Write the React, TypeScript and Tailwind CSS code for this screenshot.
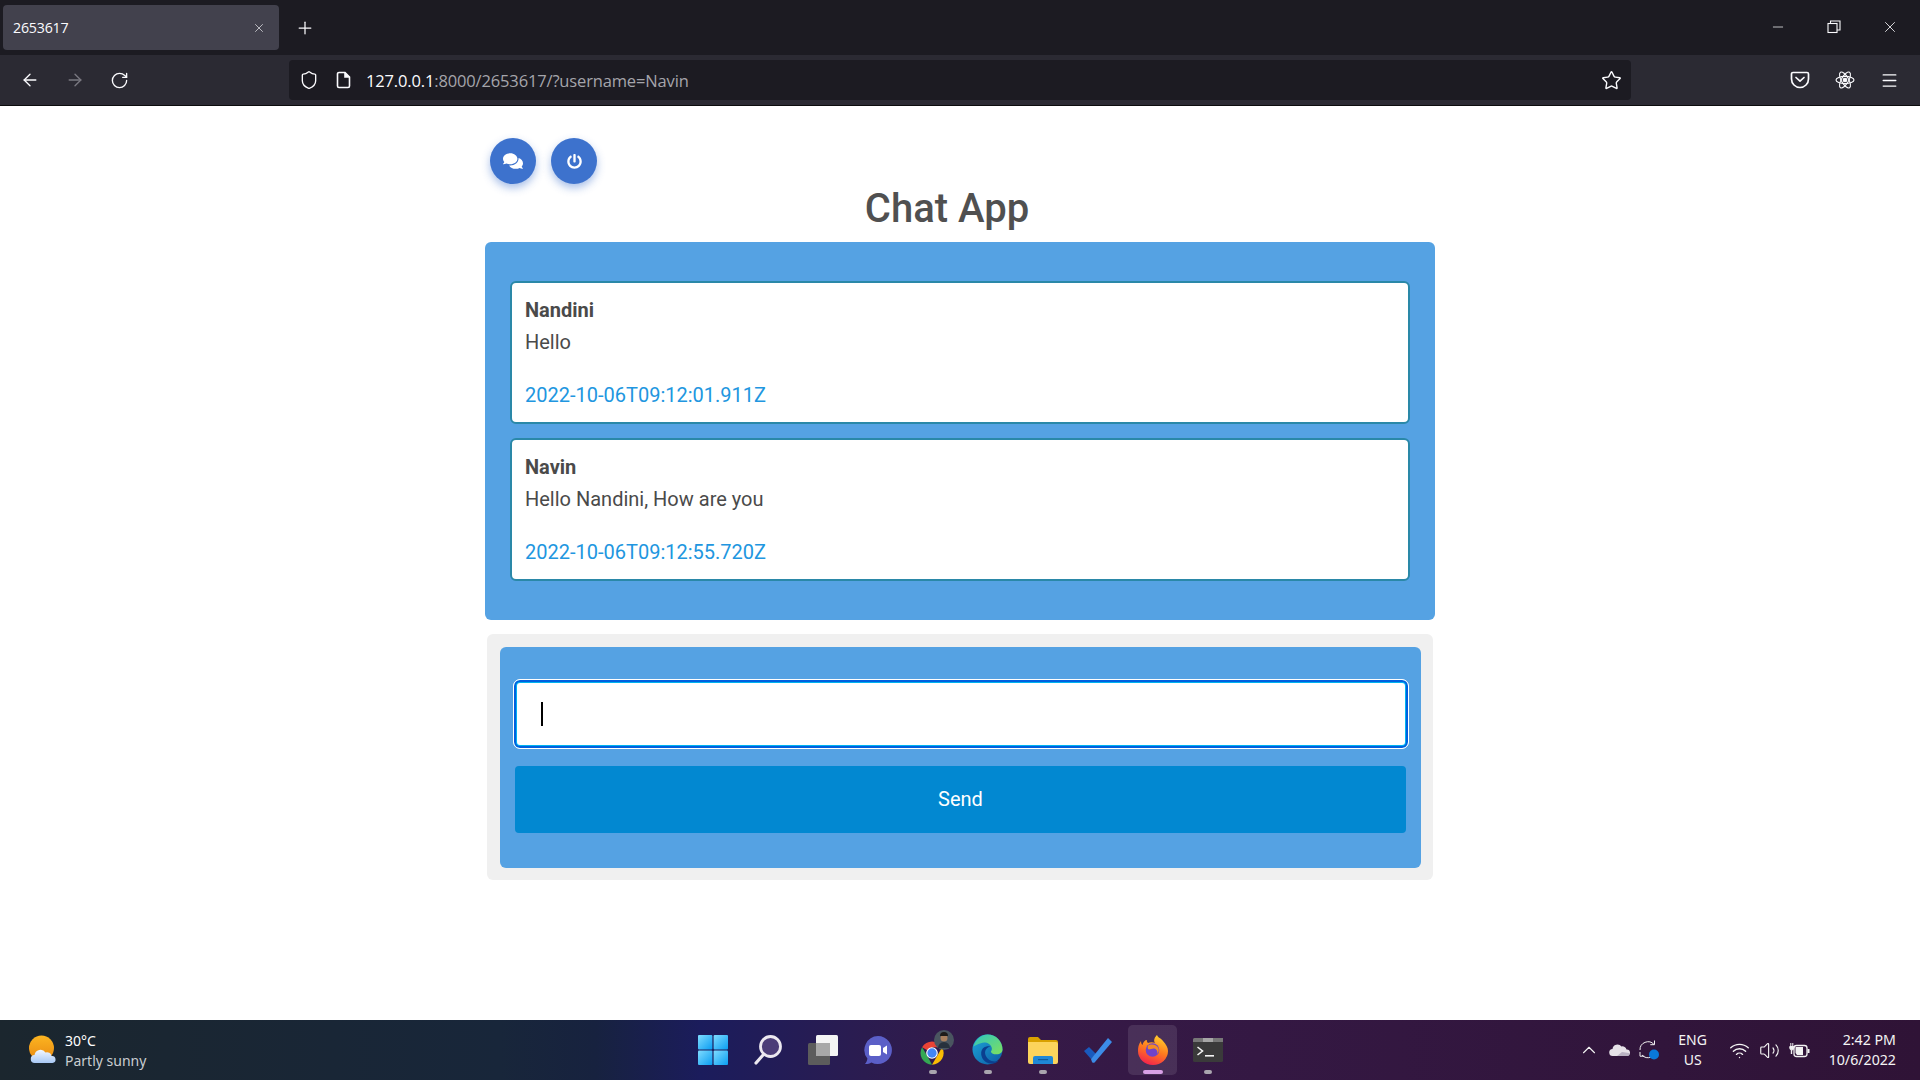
import React from "react";
import { ArrowLeft, ArrowRight, RotateCw, Shield, Star, Menu, X, Plus, Minus, ChevronUp, Wifi, Volume2 } from "lucide-react";
import { FaComments, FaPowerOff } from "react-icons/fa";

const Messages = [
  { name: "Nandini", text: "Hello", time: "2022-10-06T09:12:01.911Z" },
  { name: "Navin", text: "Hello Nandini, How are you", time: "2022-10-06T09:12:55.720Z" },
];

function FileIcon() {
  return (
    <svg width="16" height="18" viewBox="0 0 16 18" fill="none" stroke="#fbfbfe" strokeWidth="1.6">
      <path d="M3 1.5h6l4.5 4.5v9a1.5 1.5 0 0 1-1.5 1.5H3A1.5 1.5 0 0 1 1.5 15V3A1.5 1.5 0 0 1 3 1.5z" />
      <path d="M9 1.5V6h4.5" fill="#fbfbfe" />
    </svg>
  );
}

function RestoreIcon() {
  return (
    <svg width="14" height="14" viewBox="0 0 14 14" fill="none" stroke="#fbfbfe" strokeWidth="1.1">
      <rect x="1" y="3.5" width="9" height="9" />
      <path d="M3.5 3.5V1h9.5v9h-3" />
    </svg>
  );
}

function PocketIcon() {
  return (
    <svg width="20" height="18" viewBox="0 0 20 18" fill="none" stroke="#fbfbfe" strokeWidth="1.7" strokeLinecap="round" strokeLinejoin="round">
      <path d="M3 1.5h14A1.5 1.5 0 0 1 18.5 3v5a8.5 8.5 0 0 1-17 0V3A1.5 1.5 0 0 1 3 1.5z" />
      <path d="M6 6.5l4 3.7 4-3.7" />
    </svg>
  );
}

function ReactIcon() {
  return (
    <svg width="20" height="20" viewBox="0 0 20 20" fill="none" stroke="#fbfbfe" strokeWidth="1.1">
      <ellipse cx="10" cy="10" rx="9" ry="3.6" />
      <ellipse cx="10" cy="10" rx="9" ry="3.6" transform="rotate(60 10 10)" />
      <ellipse cx="10" cy="10" rx="9" ry="3.6" transform="rotate(120 10 10)" />
      <circle cx="10" cy="10" r="1.8" fill="#fbfbfe" />
    </svg>
  );
}

function WindowsIcon() {
  return (
    <svg width="30" height="30" viewBox="0 0 30 30">
      <defs>
        <linearGradient id="win" x1="0" y1="0" x2="1" y2="1">
          <stop offset="0" stopColor="#7fdcff" />
          <stop offset="1" stopColor="#0a9df2" />
        </linearGradient>
      </defs>
      <rect x="0" y="0" width="14.4" height="14.4" rx="1" fill="url(#win)" />
      <rect x="15.6" y="0" width="14.4" height="14.4" rx="1" fill="url(#win)" />
      <rect x="0" y="15.6" width="14.4" height="14.4" rx="1" fill="url(#win)" />
      <rect x="15.6" y="15.6" width="14.4" height="14.4" rx="1" fill="url(#win)" />
    </svg>
  );
}

function SearchIcon() {
  return (
    <svg width="28" height="30" viewBox="0 0 28 30" fill="none">
      <circle cx="16.5" cy="11.5" r="10" fill="#4c3d78" stroke="#ece8f0" strokeWidth="2.8" />
      <path d="M9.5 19.5L2 28" stroke="#ece8f0" strokeWidth="3.2" strokeLinecap="round" />
    </svg>
  );
}

function TaskViewIcon() {
  return (
    <svg width="30" height="30" viewBox="0 0 30 30">
      <rect x="0" y="8" width="22" height="22" rx="1.5" fill="#5c5c5c" />
      <rect x="8" y="0" width="22" height="21" rx="1.5" fill="#f4f4f4" />
      <rect x="8" y="8" width="14" height="13" fill="#a8a8a8" />
    </svg>
  );
}

function ChatIcon() {
  return (
    <svg width="30" height="30" viewBox="0 0 30 30">
      <path d="M15 1a14 14 0 1 1-6.6 26.4c-2 1.3-4.400 1.800-6.400 1.600 1.300-1.400 2.200-3.200 2.400-5.400A14 14 0 0 1 15 1z" fill="#5b5fc7" />
      <rect x="6" y="10" width="12" height="11" rx="2" fill="#fff" />
      <path d="M20 13l4-2.500v9L20 17z" fill="#fff" />
    </svg>
  );
}

function ChromeIcon() {
  return (
    <span className="relative block left-[3px] w-[35px] h-[32px]">
      <svg className="absolute left-0 top-[5px]" width="28" height="28" viewBox="0 0 48 48">
        <path d="M24 24L7 14A20 20 0 0 1 41.300 14H24z" fill="#ea4335" />
        <path d="M24 44A20 20 0 0 1 7 14l10 17z" fill="#34a853" />
        <path d="M41.300 14A20 20 0 0 1 24 44l10-17z" fill="#fbbc04" />
        <circle cx="24" cy="24" r="10" fill="#fff" />
        <circle cx="24" cy="24" r="8" fill="#4285f4" />
      </svg>
      <svg className="absolute left-[16px] -top-[4px]" width="20" height="20" viewBox="0 0 20 20">
        <circle cx="10" cy="10" r="10" fill="#4a5560" />
        <circle cx="10" cy="8" r="3.500" fill="#a9805f" />
        <path d="M4 18a6 6 0 0 1 12 0z" fill="#27313d" />
        <path d="M6 6a4 4 0 0 1 8 0z" fill="#1e1c1a" />
      </svg>
    </span>
  );
}

function EdgeIcon() {
  return (
    <svg width="31" height="31" viewBox="0 0 32 32">
      <defs>
        <linearGradient id="edgeA" x1="0" y1="0" x2="1" y2="1">
          <stop offset="0" stopColor="#1ea8d8" />
          <stop offset="1" stopColor="#0c59a4" />
        </linearGradient>
        <linearGradient id="edgeB" x1="0" y1="0" x2="1" y2="1">
          <stop offset="0" stopColor="#2ec5c0" />
          <stop offset="1" stopColor="#7ee05d" />
        </linearGradient>
      </defs>
      <circle cx="16" cy="16" r="15.500" fill="url(#edgeA)" />
      <path d="M1.500 13C4 4.500 10.500.5 16 .5 25 .5 31.500 7.500 31.500 16c0 3-2.500 5-6 5-4 0-6-1.500-6-3 .8-1 1.300-2 .8-4C19.300 10 14 7.500 9 9.500 5.500 10.500 3 12 1.500 13z" fill="url(#edgeB)" />
      <path d="M14 22c-1.500-4 .5-8 5-9-4-1-9 1-9.500 6-.5 6 4 11 10 11.500 3 .2 6-1 8-3-5 2-11 .5-13.500-5.500z" fill="#0b3f8f" />
    </svg>
  );
}

function FolderIcon() {
  return (
    <svg width="30" height="28" viewBox="0 0 30 28">
      <path d="M0 3a2 2 0 0 1 2-2h8l3 3h15a2 2 0 0 1 2 2v4H0z" fill="#d9a100" />
      <path d="M0 6h28a2 2 0 0 1 2 2v18a2 2 0 0 1-2 2H2a2 2 0 0 1-2-2z" fill="#fcd45c" />
      <path d="M5 22a2 2 0 0 1 2-2h16a2 2 0 0 1 2 2v6H5z" fill="#1f88d6" />
      <rect x="10" y="23" width="10" height="1.200" fill="#0f5b9a" />
    </svg>
  );
}

function TodoIcon() {
  return (
    <svg width="30" height="26" viewBox="0 0 30 26">
      <path d="M1 14l5-4 7 7-5 5z" fill="#195abd" />
      <path d="M8 22L25 1l4 4-17 20a2 2 0 0 1-3 0z" fill="#3c8ce7" />
    </svg>
  );
}

function FirefoxIcon() {
  return (
    <svg width="30" height="31" viewBox="0 0 30 31">
      <defs>
        <linearGradient id="ffA" x1="0.7" y1="0" x2="0.3" y2="1">
          <stop offset="0" stopColor="#ffd02c" />
          <stop offset="0.5" stopColor="#ff7a1e" />
          <stop offset="1" stopColor="#f3204e" />
        </linearGradient>
      </defs>
      <path d="M19 1c1 3 4 3 6 6 3 3 5 7 5 10a15 14 0 0 1-30 0c0-3 .5-7 3-10 0 2 .5 3 1.500 4C5 8 7 6 9 6c-.5 1 0 2 1 3 2-1 5-1 7 0-2-3 0-6 2-8z" fill="url(#ffA)" />
      <circle cx="14.500" cy="16" r="6.800" fill="#6f43c9" />
      <path d="M10 11.500c3-2 9-1.500 10.500 3 .5 2 0 4-1 5.500 .2-3-1-5.500-4-5.500-2 0-3 1-4.500 1-1.500-.5-1.500-2.500-1-4z" fill="#f48b24" />
    </svg>
  );
}

function TerminalIcon() {
  return (
    <svg width="30" height="24" viewBox="0 0 30 24">
      <rect x="0" y="0" width="30" height="24" rx="1.500" fill="#3a3a3a" />
      <path d="M0 1.500A1.500 1.500 0 0 1 1.500 0H30v4H0z" fill="#777" />
      <rect x="10" y="0" width="10" height="4" fill="#a6a6a6" />
      <path d="M4.500 9l5 4-5 4" stroke="#f3f3f3" strokeWidth="1.600" fill="none" />
      <rect x="12" y="17" width="9" height="1.600" fill="#f3f3f3" />
    </svg>
  );
}

function WeatherIcon() {
  return (
    <svg width="30" height="30" viewBox="0 0 30 30">
      <defs>
        <linearGradient id="sun" x1="0" y1="0" x2="0" y2="1">
          <stop offset="0" stopColor="#fcb521" />
          <stop offset="1" stopColor="#e98a12" />
        </linearGradient>
        <linearGradient id="cloud" x1="0" y1="0" x2="0" y2="1">
          <stop offset="0" stopColor="#f4f8ff" />
          <stop offset="1" stopColor="#a8c8f5" />
        </linearGradient>
      </defs>
      <circle cx="13.500" cy="13" r="12.500" fill="url(#sun)" />
      <path d="M7 28a4 4 0 0 1-.5-8 6 6 0 0 1 11-2.500 4.500 4.500 0 0 1 6 3.500 3.500 3.500 0 0 1 1 7z" fill="url(#cloud)" />
    </svg>
  );
}

function OneDriveIcon() {
  return (
    <svg width="21" height="14" viewBox="0 0 21 14">
      <path d="M4 13a3.500 3.500 0 0 1-.5-7 5 5 0 0 1 9-2.500 4 4 0 0 1 5 3 3.200 3.200 0 0 1 .5 6.500z" fill="#e6e2e8" />
      <path d="M8 13l5-4 7 1c1 1 .5 3-1.500 3z" fill="#b9b2c2" />
    </svg>
  );
}

function SyncIcon() {
  return (
    <svg width="22" height="22" viewBox="0 0 22 22" fill="none" stroke="#f2f2f2" strokeWidth="1">
      <path d="M2 11a8 8 0 0 1 14-5.500" />
      <path d="M16.500 1.500v4.200h-4.200" />
      <path d="M13 18a8 8 0 0 1-9-2" />
      <path d="M2 13v4.200h4.200" />
      <circle cx="16" cy="15.500" r="5" fill="#0a78d8" stroke="none" />
    </svg>
  );
}

function BatteryIcon() {
  return (
    <svg width="21" height="17" viewBox="0 0 21 17" fill="none" stroke="#f2f2f2" strokeWidth="1.300">
      <rect x="5" y="3.500" width="13" height="11" rx="2.500" />
      <path d="M6.500 5h7.500v8H8l-1.500-2z" fill="#f2f2f2" stroke="none" />
      <rect x="18.500" y="7" width="2" height="4" fill="#f2f2f2" stroke="none" />
      <path d="M2.500 12V8" strokeWidth="1.400" />
      <path d="M.8 4.500h4v1.500a2 2 0 0 1-4 0zM1.800 1v3.500M3.800 1v3.500" fill="#f2f2f2" strokeWidth="1" />
    </svg>
  );
}

export default function App() {
  return (
    <div
      className="w-[1920px] h-[1080px] flex flex-col overflow-hidden bg-white"
      style={{ fontFamily: '"Roboto", sans-serif' }}
    >
      {/* Tab strip */}
      <div className="h-[55px] shrink-0 bg-[#1c1b22] flex items-center pl-[3px] pr-[2px] text-[#fbfbfe] font-['Open_Sans',sans-serif]">
        <div className="w-[276px] h-[45px] rounded-[4px] bg-[#42414d] flex items-center justify-between pl-[10px] pr-[13px]">
          <span className="text-[14.2px] tracking-[-0.2px] mt-[1px]">2653617</span>
          <X size={14} strokeWidth={1.4} className="text-[#d5d5da]" />
        </div>
        <div className="w-[38px] ml-[7px] flex items-center justify-center">
          <Plus size={20} strokeWidth={1.5} />
        </div>
        <div className="ml-auto flex items-center -mt-[1px]">
          <span className="w-[56px] flex justify-center"><Minus size={16} strokeWidth={1.1} /></span>
          <span className="w-[56px] flex justify-center"><RestoreIcon /></span>
          <span className="w-[56px] flex justify-center"><X size={18} strokeWidth={1.1} /></span>
        </div>
      </div>

      {/* Toolbar */}
      <div className="h-[51px] shrink-0 bg-[#2b2a33] border-b border-[#0c0c0d] flex items-center pl-[20px] pr-[21px] text-[#fbfbfe] font-['Open_Sans',sans-serif]">
        <ArrowLeft size={20} strokeWidth={1.6} />
        <ArrowRight size={20} strokeWidth={1.6} className="ml-[25px] text-[#7a7981]" />
        <RotateCw size={19} strokeWidth={1.7} className="ml-[25px]" />
        <div className="ml-[160px] h-[40px] w-[1342px] rounded-[4px] bg-[#1c1b22] flex items-center pl-[10px] pr-[9px]">
          <Shield size={20} strokeWidth={1.6} />
          <span className="ml-[17px]"><FileIcon /></span>
          <span className="ml-[14px] text-[16.5px] tracking-[-0.15px] mt-[3px]">
            127.0.0.1<span className="text-[#a5a5ab]">:8000/2653617/?username=Navin</span>
          </span>
          <Star size={21} strokeWidth={1.6} className="ml-auto" />
        </div>
        <div className="ml-auto flex items-center gap-[25px]">
          <PocketIcon />
          <ReactIcon />
          <Menu size={19} strokeWidth={1.6} />
        </div>
      </div>

      {/* Page */}
      <main className="flex-1 min-h-0 flex flex-col items-center text-[#4a4a4a]">
        <div className="w-[950px] flex flex-col">
          <div className="flex gap-[15px] pl-[5px] pt-[32px]">
            <button className="w-[46px] h-[46px] rounded-full bg-[#3d72cd] text-white flex items-center justify-center shadow-[0_4px_8px_rgba(61,114,205,0.45)]">
              <FaComments size={20} />
            </button>
            <button className="w-[46px] h-[46px] rounded-full bg-[#3d72cd] text-white flex items-center justify-center shadow-[0_4px_8px_rgba(61,114,205,0.45)]">
              <FaPowerOff size={15} />
            </button>
          </div>
          <h1 className="text-center text-[40px] leading-[48px] font-medium pr-[26px] pt-[1px] h-[58px] text-[#505050]">Chat App</h1>
          <div className="rounded-[6px] bg-[#55a2e3] px-[25px] pt-[39px] pb-[39px] flex flex-col gap-[14px]">
            {Messages.map((m) => (
              <div key={m.name} className="h-[143px] rounded-[6px] border-2 border-[#2a88a8] bg-white px-[13px] pt-[11px] text-[20px] leading-[32px]">
                <div className="font-bold">{m.name}</div>
                <div>{m.text}</div>
                <div className="mt-[21px] text-[#2196e0]">{m.time}</div>
              </div>
            ))}
          </div>
          <div className="mt-[14px] mx-[2px] rounded-[6px] bg-[#f0f0f0] p-[13px] pr-[12px] pb-[12px]">
            <div className="h-[221px] rounded-[6px] bg-[#55a2e3] px-[13px] pt-[32px] flex flex-col items-stretch">
              <div className="h-[70px] -mr-[1px] rounded-[7px] bg-white border border-white shadow-[inset_0_0_0_2px_#0060df,inset_0_0_0_3px_#00b4f0] flex items-center pl-[27px]">
                <span className="block w-[1.5px] h-[24px] bg-black" />
              </div>
              <button className="mt-[17px] mx-[2px] h-[67px] pb-[2px] rounded-[4px] bg-[#0288d1] text-white text-[20px]">Send</button>
            </div>
          </div>
        </div>
      </main>

      {/* Taskbar */}
      <footer
        className="h-[60px] shrink-0 grid grid-cols-[1fr_550px_1fr] items-center text-white font-['Noto_Sans',sans-serif] bg-[linear-gradient(90deg,#1b262e_0%,#18263a_26%,#17223f_31%,#1b1c5c_36.5%,#2b1c50_45%,#361a48_52%,#2f1336_100%)]"
      >
        <div className="flex items-center pl-[28px]">
          <WeatherIcon />
          <div className="ml-[7px] text-[14px] leading-[20px] pt-[1px]">
            <div>30°C</div>
            <div className="text-[#c9cdd1]">Partly sunny</div>
          </div>
        </div>
        <div className="flex h-full items-center">
          {[
            { icon: <WindowsIcon /> },
            { icon: <SearchIcon /> },
            { icon: <TaskViewIcon /> },
            { icon: <ChatIcon /> },
            { icon: <ChromeIcon />, dot: true },
            { icon: <EdgeIcon />, dot: true },
            { icon: <FolderIcon />, dot: true },
            { icon: <TodoIcon /> },
            { icon: <FirefoxIcon />, active: true },
            { icon: <TerminalIcon />, dot: true },
          ].map((it, i) => (
            <div key={i} className="relative w-[55px] h-full flex items-center justify-center">
              {it.active && <span className="absolute left-[3px] top-[5px] w-[49px] h-[50px] rounded-[5px] bg-white/10" />}
              <span className="relative -mt-[1px]">{it.icon}</span>
              {it.dot && <span className="absolute left-[24px] top-[50px] w-[8px] h-[4px] rounded-full bg-[#a9a5ae]" />}
              {it.active && <span className="absolute left-[18px] top-[50px] w-[20px] h-[4px] rounded-full bg-[#d8a0e6]" />}
            </div>
          ))}
        </div>
        <div className="flex items-center justify-end pr-[24px] text-[14px] text-[#f4f4f4]">
          <ChevronUp size={22} strokeWidth={1.2} />
          <span className="ml-[9px]"><OneDriveIcon /></span>
          <span className="ml-[8px]"><SyncIcon /></span>
          <div className="ml-[11px] w-[44px] text-center leading-[20px]">
            <div>ENG</div>
            <div>US</div>
          </div>
          <Wifi size={21} strokeWidth={1.6} className="ml-[14px]" />
          <Volume2 size={21} strokeWidth={1.3} className="ml-[9px]" />
          <span className="ml-[9px]"><BatteryIcon /></span>
          <div className="ml-[19px] text-right leading-[20px] text-[14.2px]">
            <div>2:42 PM</div>
            <div>10/6/2022</div>
          </div>
        </div>
      </footer>
    </div>
  );
}
